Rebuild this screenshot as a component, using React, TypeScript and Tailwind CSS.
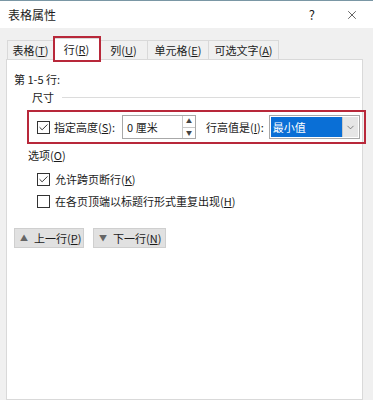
import { Check, X, ChevronDown } from 'lucide-react';

const Box = ({ checked }: { checked?: boolean }) => (
    <span className="w-[13px] h-[13px] border border-[#333] bg-white flex items-center justify-center shrink-0">
        {checked && <Check className="w-[11px] h-[11px] text-[#222]" strokeWidth={2} />}
    </span>
);

const Label = ({ text, hot, tail = '' }: { text: string; hot: string; tail?: string }) => (
    <span className="whitespace-nowrap">
        {text}(<span className="underline">{hot}</span>){tail}
    </span>
);

const Tab = ({ label, hot, w }: { label: string; hot: string; w: string }) => (
    <div className={`${w} h-[19px] border border-b-0 border-[#d9d9d9] bg-[#f0f0f0] flex items-center justify-center -ml-px`}>
        <Label text={label} hot={hot} />
    </div>
);

export default function App() {
    return (
        <div className="w-[373px] h-[400px] bg-[#f0f0f0] overflow-hidden flex flex-col border-t border-[#7a97a5] text-[11px] leading-none text-[#1b1b1b] font-['Noto_Sans_CJK_SC','Microsoft_YaHei',sans-serif]">
            {/* title bar */}
            <div className="h-[27px] bg-white flex items-center pl-[8px] pr-[14px] shrink-0">
                <span className="text-[12px]">表格属性</span>
                <span className="ml-auto mr-[30px] text-[13px]">?</span>
                <X className="w-[14px] h-[14px] text-[#333]" strokeWidth={1.3} />
            </div>

            {/* tabs */}
            <div className="h-[31px] flex items-end pl-[8px] shrink-0">
                <Tab label="表格" hot="T" w="w-[47px]" />
                <div className="relative w-[47px] h-[22px] bg-white border border-b-0 border-[#d9d9d9] flex items-center justify-center -ml-px z-10 -mb-px">
                    <Label text="行" hot="R" />
                    <div className="absolute -left-[1px] -top-[3px] w-[48px] h-[26px] border-2 border-[#b8283a]" />
                </div>
                <Tab label="列" hot="U" w="w-[49px]" />
                <Tab label="单元格" hot="E" w="w-[62px]" />
                <Tab label="可选文字" hot="A" w="w-[71px]" />
            </div>

            {/* panel */}
            <div className="flex-1 ml-[6px] mr-[10px] bg-white border border-[#d9d9d9] pt-[14px] flex flex-col">
                <div className="pl-[7px]">第 1-5 行:</div>

                <div className="flex items-center pl-[25px] mt-[7px] pr-[2px]">
                    <span>尺寸</span>
                    <div className="flex-1 h-px bg-[#dcdcdc] ml-[8px]" />
                </div>

                <div className="mt-[7px] ml-[20px] -mr-[4px] h-[34px] border-2 border-[#b8283a] flex items-center pl-[8px] pr-[4px]">
                    <Box checked />
                    <span className="ml-[4px]">
                        <Label text="指定高度" hot="S" tail=":" />
                    </span>
                    <div className="ml-[7px] w-[74px] h-[24px] border border-[#a8a8a8] flex shrink-0">
                        <div className="flex-1 flex items-center pl-[4px] whitespace-nowrap">0 厘米</div>
                        <div className="w-[13px] flex flex-col border-l border-[#c8c8c8]">
                            <div className="flex-1 flex items-center justify-center text-[6px] text-[#444] border-b border-[#c8c8c8]">▲</div>
                            <div className="flex-1 flex items-center justify-center text-[6px] text-[#444]">▼</div>
                        </div>
                    </div>
                    <span className="ml-[10px]">
                        <Label text="行高值是" hot="I" tail=":" />
                    </span>
                    <div className="ml-[5px] flex-1 h-[24px] border border-[#a8a8a8] flex p-[1px]">
                        <div className="flex-1 bg-[#0a6fd6] text-white flex items-center pl-[2px] whitespace-nowrap">最小值</div>
                        <div className="w-[16px] bg-[#e6e6e6] border-l border-[#c8c8c8] flex items-center justify-center">
                            <ChevronDown className="w-[11px] h-[11px] text-[#555]" strokeWidth={1.5} />
                        </div>
                    </div>
                </div>

                <div className="pl-[21px] mt-[6px]">
                    <Label text="选项" hot="O" />
                </div>

                <div className="pl-[30px] mt-[12px] flex items-center">
                    <Box checked />
                    <span className="ml-[5px]">
                        <Label text="允许跨页断行" hot="K" />
                    </span>
                </div>
                <div className="pl-[30px] mt-[9px] flex items-center">
                    <Box />
                    <span className="ml-[5px]">
                        <Label text="在各页顶端以标题行形式重复出现" hot="H" />
                    </span>
                </div>

                <div className="pl-[7px] mt-[20px] flex gap-[9px]">
                    <div className="w-[70px] h-[20px] bg-[#e1e1e1] border border-[#cfcfcf] flex items-center pl-[5px]">
                        <span className="text-[8px] text-[#666] mr-[6px]">▲</span>
                        <Label text="上一行" hot="P" />
                    </div>
                    <div className="w-[73px] h-[20px] bg-[#e1e1e1] border border-[#cfcfcf] flex items-center pl-[5px]">
                        <span className="text-[8px] text-[#666] mr-[6px]">▼</span>
                        <Label text="下一行" hot="N" />
                    </div>
                </div>
            </div>
        </div>
    );
}
